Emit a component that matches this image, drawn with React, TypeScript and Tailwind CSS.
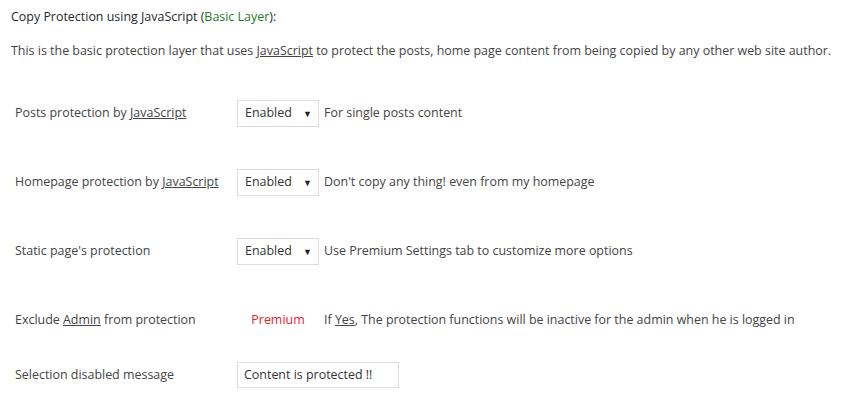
const font = { fontFamily: '"Open Sans", "Noto Sans", sans-serif' };

function SelectBox() {
  return (
    <div className="flex h-[27px] w-[82px] shrink-0 items-center justify-between border border-[#dddddd] bg-white pl-[7px] pr-[6px] text-[#333]">
      <span>Enabled</span>
      <span className="text-[9px] text-[#222]">▼</span>
    </div>
  );
}

function Row({ label, value, desc, h = 'h-[69px]' }: { label: React.ReactNode; value: React.ReactNode; desc?: React.ReactNode; h?: string }) {
  return (
    <div className={`flex items-center ${h}`}>
      <div className="w-[226px] shrink-0 pl-[4px]">{label}</div>
      {value}
      {desc && <div className="pl-[5px]">{desc}</div>}
    </div>
  );
}

export default function App() {
  return (
    <div className="min-h-[402px] w-[854px] bg-white pl-[11px] text-[12.45px] text-[#444]" style={font}>
      <div className="pt-[7px] h-[27px] leading-[20px] text-[#23282d]">
        Copy Protection using JavaScript (<span className="text-[#1e7a1e]">Basic Layer</span>):
      </div>
      <div className="mt-[14px] h-[20px] leading-[20px]">
        This is the basic protection layer that uses <u>JavaScript</u> to protect the posts, home page content from being copied by any other web site author.
      </div>
      <div className="mt-[18px]">
        <Row
          label={<>Posts protection by <u>JavaScript</u></>}
          value={<SelectBox />}
          desc="For single posts content"
        />
        <Row
          label={<>Homepage protection by <u>JavaScript</u></>}
          value={<SelectBox />}
          desc="Don't copy any thing! even from my homepage"
        />
        <Row
          label="Static page's protection"
          value={<SelectBox />}
          desc="Use Premium Settings tab to customize more options"
        />
        <Row
          label={<>Exclude <u>Admin</u> from protection</>}
          value={<div className="w-[82px] shrink-0 text-center text-[#e0242b]">Premium</div>}
          desc={<>If <u>Yes</u>, The protection functions will be inactive for the admin when he is logged in</>}
        />
        <Row
          h="h-[40px]"
          label="Selection disabled message"
          value={
            <div className="flex h-[26px] w-[162px] items-center border border-[#dddddd] bg-white pl-[6px] text-[#333]">
              Content is protected !!
            </div>
          }
        />
      </div>
    </div>
  );
}
